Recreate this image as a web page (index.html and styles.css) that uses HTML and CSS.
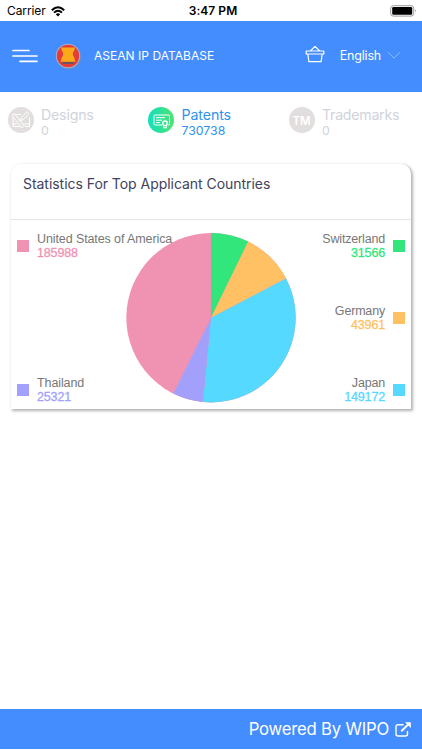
FILE: index.html
```
<!DOCTYPE html>
<html lang="en">
<head>
<meta charset="utf-8">
<title>ASEAN IP Database</title>
<link rel="stylesheet" href="styles.css">
</head>
<body>
<div class="app">
  <div class="status">
    <div class="carrier"><span>Carrier</span>
      <svg width="14" height="11" viewBox="0 0 14 11"><g fill="none" stroke="#000" stroke-width="2"><path d="M.8 4.2Q7-1.7 13.2 4.2"/><path d="M3 6.600Q7 2.800 11 6.600"/></g><path d="M4.800 8.200Q7 6.300 9.200 8.200L7 10.500Z"/></svg>
    </div>
    <span class="time">3:47 PM</span>
    <svg class="battery" width="27" height="12" viewBox="0 0 27 12"><rect x=".7" y=".7" width="23" height="10.400" rx="2.600" fill="#fff" stroke="#999"/><rect x="2.200" y="2.100" width="20" height="7.600" rx="1.200"/><path d="M25 4q1.500 1.800 0 3.600z" fill="#888"/></svg>
  </div>
  <header class="bar">
    <svg class="menu" width="26" height="14" viewBox="0 0 26 14"><path d="M1 1.500h16M1 7h24M8 12.300h17" stroke="#fff" stroke-width="1.700" stroke-linecap="round"/></svg>
    <svg class="logo" width="30" height="30" viewBox="0 0 30 30"><circle cx="16.400" cy="16.400" r="12.200" fill="#6d8fc4" opacity=".65"/><circle cx="15" cy="15" r="12.200" fill="#a9b0d0"/><circle cx="15" cy="15" r="11.200" fill="#e53c35"/><path d="M8.200 6.600h13.600q.4 2.800-1.800 5v2.800q2.200 2.600 2.400 6.400H7.600q.2-3.800 2.400-6.400v-2.800Q7.800 9.400 8.200 6.600Z" fill="#fba81a"/><path d="M9.300 22h11.400" stroke="#665466" stroke-width="1.900"/></svg>
    <span class="brand">ASEAN IP DATABASE</span>
    <svg class="basket" width="20" height="18" viewBox="0 0 20 18"><g fill="none" stroke="#fff" stroke-width="1.200" stroke-linejoin="round"><path d="M1.200 6h17.600v3H1.200zM2.800 9l1.100 7.700h12.200L17.200 9M5.300 6 10 1.300 14.700 6"/></g></svg>
    <span class="lang">English</span>
    <svg class="chev" width="14" height="9" viewBox="0 0 14 9"><path d="M1 1.200 7 7.200l6-6" fill="none" stroke="#a5c9ff" stroke-width=".8"/></svg>
  </header>
  <nav class="tabs">
    <div class="tab">
      <svg width="26" height="26" viewBox="0 0 26 26"><circle cx="13" cy="13" r="13" fill="#e2dede"/><g fill="none" stroke="#fff" stroke-width="1"><path d="M13 7.500H5v12h7M17 19.500h4.500v-9M5 17h4M15 17h6.500"/><path d="m4.200 8.700 2.100-2.200L16 18.700l-2.100 2.200zM11.800 14.200l1-3.200 6.400-6.300 1.800 2-6.300 6.300zM12.800 11l2 2" fill="#e2dede"/></g></svg>
      <div><div class="name">Designs</div><div class="count">0</div></div>
    </div>
    <div class="tab active">
      <svg width="26" height="26" viewBox="0 0 26 26"><defs><linearGradient id="g"><stop stop-color="#13dfc0"/><stop offset="1" stop-color="#4ee36f"/></linearGradient></defs><circle cx="13" cy="13" r="13" fill="url(#g)"/><g fill="none" stroke="#fff"><path d="M14 18H7q-1 0-1-1V9q0-1 1-1h13.500q1 0 1 1v8q0 1-1 1h-.5M8 10.700h9M8 13.200h6M8 15.600h4"/><circle cx="17" cy="16.300" r="2.300" stroke-width="1.300"/><path d="M15.700 18.200v3l1.300-.8 1.300.8v-3"/></g></svg>
      <div><div class="name patents">Patents</div><div class="count">730738</div></div>
    </div>
    <div class="tab">
      <div class="tm">TM</div>
      <div><div class="name marks">Trademarks</div><div class="count">0</div></div>
    </div>
  </nav>
  <main class="card">
    <h1>Statistics For Top Applicant Countries</h1>
    <section class="chart">
      <div class="legend">
        <div class="item pink"><i></i><div><span>United States of America</span><b>185988</b></div></div>
        <div class="item violet"><i></i><div><span>Thailand</span><b>25321</b></div></div>
      </div>
      <svg class="pie" width="170" height="170" viewBox="-85 -84.700 170 170">
        <circle r="84.700" fill="#f093b3"/>
        <path d="M0 0V-84.700A84.700 84.700 0 0 1 37.210-76.090Z" fill="#32e67b"/>
        <path d="M0 0 37.210-76.090A84.700 84.700 0 0 1 75.040-39.280Z" fill="#ffc163"/>
        <path d="M0 0 75.040-39.280A84.700 84.700 0 0 1-8.160 84.310Z" fill="#56d9ff"/>
        <path d="M0 0-8.160 84.310A84.700 84.700 0 0 1-37.710 75.840Z" fill="#a3a0fb"/>
      </svg>
      <div class="legend right">
        <div class="item green"><i></i><div><span>Switzerland</span><b>31566</b></div></div>
        <div class="item orange"><i></i><div><span>Germany</span><b>43961</b></div></div>
        <div class="item cyan"><i></i><div><span>Japan</span><b>149172</b></div></div>
      </div>
    </section>
  </main>
  <footer class="foot"><span>Powered By WIPO</span>
    <svg width="16" height="15" viewBox="0 0 16 15"><path d="M8.500 2.700H3Q1 2.700 1 4.700V12q0 2 2 2h7.500q2 0 2-2V9" fill="none" stroke="#fff" stroke-width="1.400"/><path d="M6.300 9.300 13 2.600" stroke="#fff" stroke-width="2"/><path d="M10 .2h5.800V6z" fill="#fff"/></svg>
  </footer>
</div>
</body>
</html>
```
FILE: styles.css
```
* { box-sizing: border-box; }
body { margin: 0; background: #fff; font-family: Inter, "Liberation Sans", sans-serif; }
svg { display: block; flex: none; }
.app { width: 422px; height: 750px; display: flex; flex-direction: column; overflow: hidden; }
.status { height: 21px; flex: none; display: grid; grid-template-columns: 1fr auto 1fr; align-items: center; padding: 1px 5px 0 7px; font-size: 12px; line-height: 20px; color: #000; }
.carrier { display: flex; align-items: center; gap: 5px; letter-spacing: -.1px; }
.time { font-weight: 600; letter-spacing: .05px; padding-left: 2px; }
.battery { justify-self: end; }
.bar { height: 71px; flex: none; background: #438dff; display: flex; align-items: center; padding: 0 21px 2px 12px; color: #fff; }
.logo { margin-left: 15px; }
.brand { margin-left: 11px; font-size: 12px; letter-spacing: .03px; white-space: nowrap; }
.basket { margin-left: auto; margin-top: -4px; }
.lang { margin-left: 15px; font-size: 12.500px; letter-spacing: -.2px; }
.chev { margin-left: 6px; }
.tabs { height: 72px; flex: none; display: grid; grid-template-columns: 140.500px 140.500px 1fr; padding: 15px 0 0 7.500px; }
.tab { display: flex; gap: 7.500px; color: #d0d3dc; white-space: nowrap; }
.active { color: #2f92f0; }
.name { font-size: 14.200px; line-height: 16px; letter-spacing: -.2px; }
.patents { letter-spacing: -.1px; }
.marks { letter-spacing: -.27px; }
.count { font-size: 12.300px; line-height: 15px; }
.tm { width: 26px; height: 26px; flex: none; border-radius: 50%; background: #e2dede; color: #fff; font-size: 11.500px; font-weight: 600; line-height: 28px; text-align: center; }
.card { height: 245px; width: 400px; flex: none; margin-left: 11px; border-radius: 10px 10px 0 0; background: #fff; box-shadow: 1.500px 1.500px 3px rgba(0,0,0,.3); }
h1 { margin: 0; height: 56px; border-bottom: 1px solid #e6e6e6; padding: 11px 12px; font-size: 14px; font-weight: 400; line-height: 18px; letter-spacing: -.04px; color: #43425d; }
.chart { height: 189px; display: grid; grid-template-columns: 115px 170px 1fr; font-family: "Liberation Sans", sans-serif; }
.pie { margin-top: 13px; }
.legend { display: flex; flex-direction: column; justify-content: space-between; padding: 11px 0 5px 6px; position: relative; z-index: 1; }
.right { padding: 11px 6px 5px 0; }
.item { display: flex; align-items: center; gap: 8px; height: 29px; font-size: 12.500px; line-height: 14px; letter-spacing: -.1px; white-space: nowrap; }
.item i { width: 12px; height: 12px; flex: none; background: currentColor; }
.item span { display: block; color: #777; padding-top: 1px; }
.item b { display: block; font-weight: 400; letter-spacing: -.15px; -webkit-text-stroke: .3px currentColor; }
.right .item { flex-direction: row-reverse; text-align: right; letter-spacing: -.18px; }
.pink { color: #f093b3; }
.violet { color: #a3a0fb; }
.green { color: #32e67b; }
.orange { color: #ffc163; }
.cyan { color: #56d9ff; }
.foot { height: 40px; flex: none; margin: auto 0 1px; background: #438dff; color: #fff; display: flex; align-items: center; justify-content: flex-end; gap: 6px; padding-right: 11px; font-size: 16.700px; letter-spacing: -.2px; }
```
